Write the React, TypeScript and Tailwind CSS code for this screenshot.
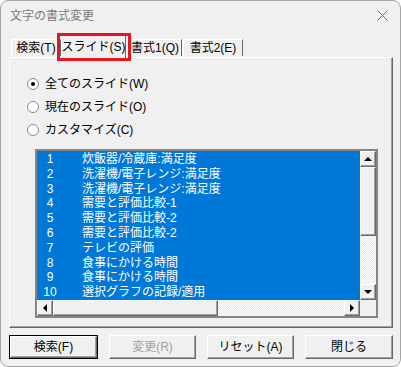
const items = [
  "炊飯器/冷蔵庫:満足度",
  "洗濯機/電子レンジ:満足度",
  "洗濯機/電子レンジ:満足度",
  "需要と評価比較-1",
  "需要と評価比較-2",
  "需要と評価比較-2",
  "テレビの評価",
  "食事にかける時間",
  "食事にかける時間",
  "選択グラフの記録/適用",
];

const raised = "border border-t-white border-l-white border-r-[#696969] border-b-[#696969] shadow-[inset_-1px_-1px_0_#a0a0a0]";

function Arrow({ dir }: { dir: "up" | "down" | "left" | "right" }) {
  const pts = {
    up: "0,4 4,0 8,4",
    down: "0,0 8,0 4,4",
    left: "4,0 4,8 0,4",
    right: "0,0 4,4 0,8",
  }[dir];
  const vertical = dir === "up" || dir === "down";
  return (
    <svg width={vertical ? 8 : 4} height={vertical ? 4 : 8} viewBox={vertical ? "0 0 8 4" : "0 0 4 8"}>
      <polygon points={pts} fill="#000" />
    </svg>
  );
}

function ScrollBtn({ dir }: { dir: "up" | "down" | "left" | "right" }) {
  return (
    <div className={`flex h-[16px] w-[16px] shrink-0 items-center justify-center bg-[#f0f0f0] ${raised}`}>
      <Arrow dir={dir} />
    </div>
  );
}

function Radio({ label, checked }: { label: string; checked?: boolean }) {
  return (
    <div className="flex h-[16px] items-center gap-[6px]">
      <span className="flex h-[12px] w-[12px] items-center justify-center rounded-full border border-[#8a8a8a] bg-white">
        {checked && <span className="h-[4px] w-[4px] rounded-full bg-black" />}
      </span>
      <span className="whitespace-nowrap text-[12px] leading-none text-black">{label}</span>
    </div>
  );
}

export default function App() {
  const track = "bg-[repeating-conic-gradient(#ffffff_0_25%,#e6e6e6_0_50%)] bg-[length:2px_2px]";
  const tab = "flex items-center justify-center whitespace-nowrap border-l border-t border-white border-r border-r-[#696969]";
  return (
    <div className="relative h-[367px] w-[401px] overflow-hidden rounded-[8px] border border-[#a6a6a6] bg-[#f0f0f0] font-['Liberation_Sans','Noto_Sans_CJK_JP',sans-serif]">
      {/* title bar */}
      <div className="flex h-[29px] items-center justify-between pl-[9px] pr-[12px]">
        <span className="text-[12px] text-[#7a7a7a]">文字の書式変更</span>
        <svg width="11" height="11" viewBox="0 0 11 11">
          <path d="M0.5 0.5 L10.5 10.5 M10.5 0.5 L0.5 10.5" stroke="#6f6f6f" strokeWidth="1" />
        </svg>
      </div>

      {/* tabs */}
      <div className="relative z-10 flex h-[27px] items-end pl-[10px] text-[12px] leading-none text-black">
        <div className={`mb-px h-[17px] w-[50px] ${tab}`}>検索(T)</div>
        <div className={`-mb-px h-[23px] w-[65px] !items-start bg-[#f0f0f0] pt-[5px] ${tab}`}>スライド(S)</div>
        <div className={`mb-px ml-[2px] h-[17px] w-[54px] ${tab}`}>書式1(Q)</div>
        <div className={`mb-px ml-px h-[17px] w-[60px] ${tab}`}>書式2(E)</div>
      </div>

      {/* highlight annotation */}
      <div className="absolute left-[56px] top-[32px] z-20 h-[28px] w-[74px] border-[3px] border-[#e8161f]" />

      {/* panel */}
      <div className="ml-[8px] h-[271px] w-[384px] border border-t-white border-l-white border-r-[#696969] border-b-[#696969] shadow-[inset_-1px_-1px_0_#a0a0a0]">
        <div className="flex flex-col gap-[7px] pl-[17px] pt-[18px]">
          <Radio label="全てのスライド(W)" checked />
          <Radio label="現在のスライド(O)" />
          <Radio label="カスタマイズ(C)" />
        </div>

        <div className="ml-[25px] mt-[11px] grid h-[169px] w-[343px] grid-cols-[1fr_16px] grid-rows-[1fr_16px] border-2 border-[#858585] bg-[#f0f0f0]">
          <div className="overflow-hidden bg-[#0078d7] pt-px text-[12px] text-white">
            {items.map((t, i) => (
              <div key={i} className="grid h-[14.8px] grid-cols-[26px_1fr] items-center gap-x-[19px] whitespace-nowrap leading-[14.8px]">
                <span className="text-center">{i + 1}</span>
                <span>{t}</span>
              </div>
            ))}
          </div>
          <div className={`flex flex-col ${track}`}>
            <ScrollBtn dir="up" />
            <div className={`h-[69px] w-[16px] bg-[#f0f0f0] ${raised}`} />
            <div className="flex-1" />
            <ScrollBtn dir="down" />
          </div>
          <div className={`flex ${track}`}>
            <ScrollBtn dir="left" />
            <div className={`h-[16px] w-[165px] bg-[#f0f0f0] ${raised}`} />
            <div className="flex-1" />
            <ScrollBtn dir="right" />
          </div>
          <div className="bg-[#f0f0f0]" />
        </div>
      </div>

      {/* buttons */}
      <div className="mt-[7px] flex gap-[11px] pl-[8px] text-[12px]">
        <button className="h-[24px] w-[89px] border border-black bg-[#f0f0f0] text-black">
          <div className={`flex h-full w-full items-center justify-center ${raised}`}>検索(F)</div>
        </button>
        <button className={`h-[24px] w-[87px] bg-[#f0f0f0] text-[#a0a0a0] ${raised}`}>変更(R)</button>
        <button className={`h-[24px] w-[87px] bg-[#f0f0f0] text-black ${raised}`}>リセット(A)</button>
        <button className={`h-[24px] w-[88px] bg-[#f0f0f0] text-black ${raised}`}>閉じる</button>
      </div>
    </div>
  );
}
